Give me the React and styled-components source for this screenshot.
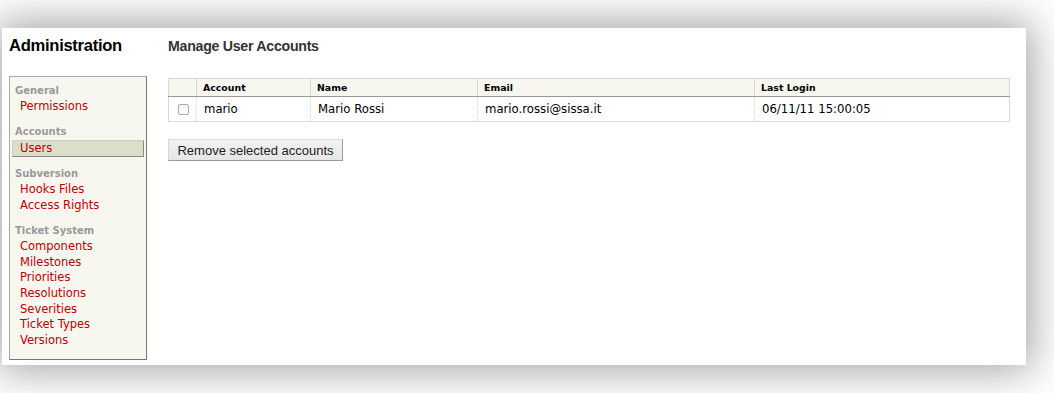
import React from 'react';
import styled, { createGlobalStyle } from 'styled-components';

const GlobalStyle = createGlobalStyle`
  html, body {
    margin: 0;
    padding: 0;
    background: #fff;
  }
  body {
    font-family: 'DejaVu Sans', Verdana, sans-serif;
    font-size: 13px;
    color: #000;
  }
`;

const Stage = styled.div`
  width: 1054px;
  height: 393px;
  box-sizing: border-box;
  padding: 28px 28px 28px 2px;
  overflow: hidden;
  background: #fff;
`;

const Page = styled.div`
  height: 100%;
  box-sizing: border-box;
  background: #fff;
  box-shadow: 0 0 40px 6px rgba(0, 0, 0, 0.36);
  padding: 8px 17px 0 7px;
  display: flex;
  gap: 21px;
`;

const SideColumn = styled.div`
  width: 138px;
  flex: none;
  display: flex;
  flex-direction: column;
`;

const MainColumn = styled.div`
  flex: 1;
  display: flex;
  flex-direction: column;
`;

const Title = styled.h1`
  margin: 0 0 20px;
  font-family: 'Liberation Sans', Arial, sans-serif;
  font-size: 16.6px;
  line-height: 20px;
  font-weight: bold;
  letter-spacing: -0.018em;
  color: #000;
`;

const Heading = styled.h2`
  margin: 0 0 22px;
  font-family: 'Liberation Sans', Arial, sans-serif;
  font-size: 14.2px;
  line-height: 20px;
  font-weight: bold;
  letter-spacing: -0.02em;
  color: #333;
`;

//* sidebar
const Tabs = styled.nav`
  background: #f7f7f0;
  border: 1px solid #a8a8a8;
  border-right-color: #777;
  border-bottom-color: #777;
  padding: 7px 0 0;
`;

const Group = styled.ul`
  list-style: none;
  margin: 0 0 10px;
  padding: 0;
`;

const GroupTitle = styled.li`
  color: #999;
  font-size: 10px;
  font-weight: bold;
  line-height: 13px;
  padding: 0 5px 2px;
`;

const Item = styled.li`
  margin: 0 2px;
  font-size: 11.5px;
  line-height: 15.7px;
  border-style: solid;
  border-width: ${({ $active }) => ($active ? '1px' : '0')};
  background: ${({ $active }) => ($active ? '#ddddcc' : 'transparent')};
  border-color: ${({ $active }) => ($active ? '#d0d0c0 #888 #888 #d0d0c0' : 'transparent')};
  padding-left: ${({ $active }) => ($active ? '7px' : '8px')};

  a {
    color: #b00;
    text-decoration: none;
  }
`;

//* table
const Listing = styled.table`
  width: 841px;
  table-layout: fixed;
  border-collapse: collapse;
  border: 1px solid #d7d7d7;
  margin-bottom: 17px;
`;

const HeadCell = styled.th`
  background: #f7f7f0;
  border-bottom: 1px solid #999;
  border-left: 1px solid #d7d7d7;
  text-align: left;
  font-size: 9.4px;
  font-weight: bold;
  height: 17px;
  padding: 0 0 0 6px;
  color: #000;
`;

const Cell = styled.td`
  border-left: 1px dotted #d7d7d7;
  border-bottom: 1px solid #ddd;
  font-size: 11.7px;
  height: 24px;
  padding: 0 0 0 ${({ $check }) => ($check ? '9px' : '7px')};
  color: #000;
`;

const Check = styled.input`
  appearance: none;
  display: block;
  margin: 0;
  width: 11px;
  height: 11px;
  border: 1px solid #a9a9a9;
  border-radius: 2px;
  background: linear-gradient(#f4f4f4, #fff);
`;

const Button = styled.button`
  align-self: flex-start;
  width: 175px;
  height: 22px;
  padding: 0;
  font-family: 'Liberation Sans', Arial, sans-serif;
  font-size: 13px;
  color: #222;
  background: linear-gradient(#f2f2f2, #e6e6e6);
  border: 1px solid #d8d8d8;
  border-right-color: #999;
  border-bottom-color: #999;
  border-radius: 0;
`;

const groups = [
  { title: 'General', items: ['Permissions'] },
  { title: 'Accounts', items: ['Users'], active: 'Users' },
  { title: 'Subversion', items: ['Hooks Files', 'Access Rights'] },
  {
    title: 'Ticket System',
    items: ['Components', 'Milestones', 'Priorities', 'Resolutions', 'Severities', 'Ticket Types', 'Versions'],
  },
];

const columns = [
  { label: '', width: 28 },
  { label: 'Account', width: 114 },
  { label: 'Name', width: 167 },
  { label: 'Email', width: 277 },
  { label: 'Last Login', width: 255 },
];

const App = () => (
  <>
    <GlobalStyle />
    <Stage>
      <Page>
        <SideColumn>
          <Title>Administration</Title>
          <Tabs>
            {groups.map((g) => (
              <Group key={g.title}>
                <GroupTitle>{g.title}</GroupTitle>
                {g.items.map((it) => (
                  <Item key={it} $active={g.active === it}>
                    <a href="#">{it}</a>
                  </Item>
                ))}
              </Group>
            ))}
          </Tabs>
        </SideColumn>
        <MainColumn>
          <Heading>Manage User Accounts</Heading>
          <Listing>
            <colgroup>
              {columns.map((c, i) => (
                <col key={i} style={{ width: c.width }} />
              ))}
            </colgroup>
            <thead>
              <tr>
                {columns.map((c, i) => (
                  <HeadCell key={i}>{c.label}</HeadCell>
                ))}
              </tr>
            </thead>
            <tbody>
              <tr>
                <Cell $check>
                  <Check type="checkbox" />
                </Cell>
                <Cell>mario</Cell>
                <Cell>Mario Rossi</Cell>
                <Cell>mario.rossi@sissa.it</Cell>
                <Cell>06/11/11 15:00:05</Cell>
              </tr>
            </tbody>
          </Listing>
          <Button type="button">Remove selected accounts</Button>
        </MainColumn>
      </Page>
    </Stage>
  </>
);

export default App;
